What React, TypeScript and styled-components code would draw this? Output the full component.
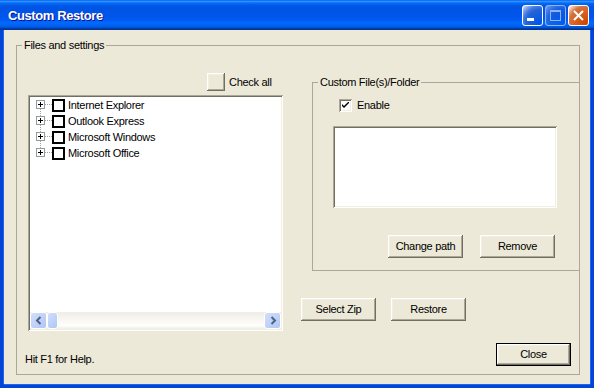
import React from 'react'
import styled, { createGlobalStyle } from 'styled-components'

const GlobalStyle = createGlobalStyle`
  html, body {
    margin: 0;
    padding: 0;
    background: #fff;
  }
  body {
    font-family: 'Liberation Sans', Arial, sans-serif;
    font-size: 11px;
    line-height: 13px;
    letter-spacing: -0.3px;
    color: #000;
  }
`

const Window = styled.div`
  width: 594px;
  height: 388px;
  display: flex;
  flex-direction: column;
  overflow: hidden;
  background: #0843d8;
`

const TitleBar = styled.div`
  height: 30px;
  flex: none;
  display: flex;
  align-items: center;
  padding: 0 5px 0 8px;
  box-sizing: border-box;
  background: linear-gradient(
    to bottom,
    #0058ee 0%,
    #3593ff 4%,
    #288eff 6%,
    #127dff 8%,
    #036ffc 10%,
    #0262ee 14%,
    #0057e5 20%,
    #0054e3 24%,
    #0055eb 56%,
    #005bf5 66%,
    #026afe 76%,
    #0062ef 86%,
    #0052d6 92%,
    #0040ab 94%,
    #003092 100%
  );
`

const Title = styled.div`
  flex: 1;
  color: #fff;
  font-weight: bold;
  font-size: 13px;
  letter-spacing: -0.4px;
  text-shadow: 1px 1px #0f1089;
`

const Caps = styled.div`
  display: flex;
  gap: 2px;
`

const capBg = {
  min: 'radial-gradient(circle at 90% 90%, #0054e9 0%, #2263d5 55%, #4479e4 70%, #a3bbec 90%, #fff 100%)',
  max: 'radial-gradient(circle at 90% 90%, #0054e9 0%, #2263d5 55%, #4479e4 70%, #a3bbec 90%, #fff 100%)',
  close: 'radial-gradient(circle at 90% 90%, #cc4600 0%, #dc6527 55%, #cd7546 70%, #ffccb2 90%, #fff 100%)',
}

const CapButton = styled.div<{ $kind: 'min' | 'max' | 'close' }>`
  width: 21px;
  height: 21px;
  box-sizing: border-box;
  border: 1px solid #fff;
  border-radius: 3px;
  background: ${p => capBg[p.$kind]};
  opacity: ${p => (p.$kind === 'max' ? 0.55 : 1)};
  display: flex;
  svg {
    display: block;
  }
`

const Client = styled.div`
  flex: 1;
  margin: 0 4px 4px 4px;
  padding: 15px 10px 9px 12px;
  background: #ece9d8;
  display: flex;
  box-shadow: -1px 0 #166aee, 1px 0 #166aee, 0 1px #166aee;
`

const GroupBox = styled.div<{ $open?: boolean }>`
  position: relative;
  border: 1px solid #aca899;
  ${p => (p.$open ? 'border-right: none;' : '')}
  display: flex;
  flex-direction: column;
`

const Caption = styled.span`
  position: absolute;
  top: -7px;
  left: 5px;
  padding: 0 2px;
  background: #ece9d8;
  white-space: nowrap;
`

const OuterGroup = styled(GroupBox)`
  flex: 1;
`

const TopArea = styled.div`
  display: flex;
`

const TreeColumn = styled.div`
  width: 255px;
  margin: 27px 0 0 11px;
  display: flex;
  flex-direction: column;
`

const CheckAllRow = styled.div`
  height: 18px;
  display: flex;
  align-items: center;
  gap: 4px;
  padding-left: 179px;
`

const bevel = `
  background: #ece9d8;
  box-shadow: inset -1px -1px #716f64, inset 1px 1px #fff,
    inset -2px -2px #aca899, inset 2px 2px #f1efe2;
`

const sunken = `
  box-shadow: inset 1px 1px #aca899, inset -1px -1px #fff,
    inset 2px 2px #716f64, inset -2px -2px #f1efe2;
`

const SquareButton = styled.div`
  width: 18px;
  height: 18px;
  ${bevel}
`

const Tree = styled.div`
  margin-top: 4px;
  height: 236px;
  box-sizing: border-box;
  padding: 2px;
  background: #fff;
  ${sunken}
  display: flex;
  flex-direction: column;
`

const TreeList = styled.div`
  flex: 1;
`

const TreeRow = styled.div`
  height: 16px;
  display: flex;
  align-items: center;
  white-space: nowrap;
  svg {
    flex: none;
    display: block;
  }
`

const FlatCheck = styled.div`
  width: 13px;
  height: 13px;
  box-sizing: border-box;
  border: 2px solid #000;
  background: #fff;
  flex: none;
`

const RowLabel = styled.span`
  margin-left: 3px;
`

const HScroll = styled.div`
  height: 17px;
  flex: none;
  display: flex;
  background: linear-gradient(to bottom, #eeede5, #f3f1ec 20%, #fefefb 80%, #eeede5);
`

const ScrollPart = styled.div<{ $w: number }>`
  width: ${p => p.$w}px;
  height: 17px;
  box-sizing: border-box;
  border: 1px solid #fff;
  border-radius: 3px;
  background: linear-gradient(135deg, #d3def9, #bcd0f8 60%, #b0c5f5);
  display: flex;
  align-items: center;
  justify-content: center;
  svg {
    display: block;
  }
`

const Spacer = styled.div`
  flex: 1;
`

const SidePanel = styled.div`
  flex: 1;
  margin: 36px 0 0 18px;
  display: flex;
  flex-direction: column;
`

const CustomGroup = styled(GroupBox)`
  margin-left: 11px;
  height: 189px;
  box-sizing: border-box;
`

const EnableRow = styled.label`
  display: flex;
  align-items: center;
  gap: 5px;
  margin: 16px 0 0 26px;
  height: 13px;
`

const SunkenCheck = styled.div`
  width: 13px;
  height: 13px;
  background: #fff;
  ${sunken}
  display: flex;
  align-items: center;
  justify-content: center;
  svg {
    display: block;
  }
`

const PathBox = styled.div`
  width: 224px;
  height: 82px;
  margin: 14px 0 0 20px;
  background: #fff;
  ${sunken}
`

const ButtonRow = styled.div<{ $gap: number; $indent?: number }>`
  display: flex;
  gap: ${p => p.$gap}px;
  padding-left: ${p => p.$indent || 0}px;
`

const PushButton = styled.button<{ $default?: boolean }>`
  width: 75px;
  height: 23px;
  padding: 0;
  border: none;
  font: inherit;
  letter-spacing: inherit;
  color: #000;
  ${bevel}
  ${p =>
    p.$default
      ? `box-shadow: inset 0 0 0 1px #000, inset -2px -2px #716f64, inset 2px 2px #fff,
         inset -3px -3px #aca899, inset 3px 3px #f1efe2;`
      : ''}
`

const BottomRow = styled.div`
  margin-top: auto;
  display: flex;
  justify-content: space-between;
  align-items: flex-end;
  padding: 0 8px 8px 8px;
`

const items = ['Internet Explorer', 'Outlook Express', 'Microsoft Windows', 'Microsoft Office']

function Expander({ first, last }: { first: boolean; last: boolean }) {
  const top = first ? 8 : 0
  const bottom = last ? 8 : 16
  return (
    <svg width="22" height="16" viewBox="0 0 22 16">
      <g stroke="#a0a0a0" strokeDasharray="1 1" fill="none">
        {top < 3 && <line x1="10.5" y1={top} x2="10.5" y2="3" />}
        {bottom > 12 && <line x1="10.5" y1="12" x2="10.5" y2={bottom} />}
        <line x1="15" y1="7.5" x2="22" y2="7.5" />
      </g>
      <rect x="6.5" y="3.5" width="8" height="8" fill="#fff" stroke="#919b9c" />
      <path d="M8 7.5h5M10.5 5v5" stroke="#000" />
    </svg>
  )
}

function Chevron({ dir }: { dir: 'left' | 'right' }) {
  const d = dir === 'left' ? 'M8.5 4 L5 7.5 L8.5 11' : 'M5.5 4 L9 7.5 L5.5 11'
  return (
    <svg width="14" height="15" viewBox="0 0 14 15">
      <path d={d} stroke="#4d6185" strokeWidth="2" fill="none" />
    </svg>
  )
}

export default function App() {
  return (
    <>
      <GlobalStyle />
      <Window>
        <TitleBar>
          <Title>Custom Restore</Title>
          <Caps>
            <CapButton $kind="min">
              <svg width="19" height="19" viewBox="0 0 19 19">
                <rect x="4" y="12" width="7" height="3" fill="#fff" />
              </svg>
            </CapButton>
            <CapButton $kind="max">
              <svg width="19" height="19" viewBox="0 0 19 19">
                <rect x="4.5" y="4.5" width="10" height="10" fill="none" stroke="#fff" />
                <rect x="4" y="4" width="11" height="2" fill="#fff" />
              </svg>
            </CapButton>
            <CapButton $kind="close">
              <svg width="19" height="19" viewBox="0 0 19 19">
                <path d="M5 5 L14 14 M14 5 L5 14" stroke="#fff" strokeWidth="2" />
              </svg>
            </CapButton>
          </Caps>
        </TitleBar>
        <Client>
          <OuterGroup>
            <Caption>Files and settings</Caption>
            <TopArea>
              <TreeColumn>
                <CheckAllRow>
                  <SquareButton />
                  <span>Check all</span>
                </CheckAllRow>
                <Tree>
                  <TreeList>
                    {items.map((name, i) => (
                      <TreeRow key={name}>
                        <Expander first={i === 0} last={i === items.length - 1} />
                        <FlatCheck />
                        <RowLabel>{name}</RowLabel>
                      </TreeRow>
                    ))}
                  </TreeList>
                  <HScroll>
                    <ScrollPart $w={17}>
                      <Chevron dir="left" />
                    </ScrollPart>
                    <ScrollPart $w={11} />
                    <Spacer />
                    <ScrollPart $w={17}>
                      <Chevron dir="right" />
                    </ScrollPart>
                  </HScroll>
                </Tree>
              </TreeColumn>
              <SidePanel>
                <CustomGroup $open>
                  <Caption>Custom File(s)/Folder</Caption>
                  <EnableRow>
                    <SunkenCheck>
                      <svg width="7" height="7" viewBox="0 0 7 7">
                        <path d="M0 2 L0 4 L2 6 L7 1 L7 -1 L2 4 Z" fill="#000" />
                      </svg>
                    </SunkenCheck>
                    <span>Enable</span>
                  </EnableRow>
                  <PathBox />
                  <ButtonRow $gap={17} $indent={75} style={{ marginTop: 27 }}>
                    <PushButton>Change path</PushButton>
                    <PushButton>Remove</PushButton>
                  </ButtonRow>
                </CustomGroup>
                <ButtonRow $gap={15} style={{ marginTop: 27 }}>
                  <PushButton>Select Zip</PushButton>
                  <PushButton>Restore</PushButton>
                </ButtonRow>
              </SidePanel>
            </TopArea>
            <BottomRow>
              <span>Hit F1 for Help.</span>
              <PushButton $default>Close</PushButton>
            </BottomRow>
          </OuterGroup>
        </Client>
      </Window>
    </>
  )
}
